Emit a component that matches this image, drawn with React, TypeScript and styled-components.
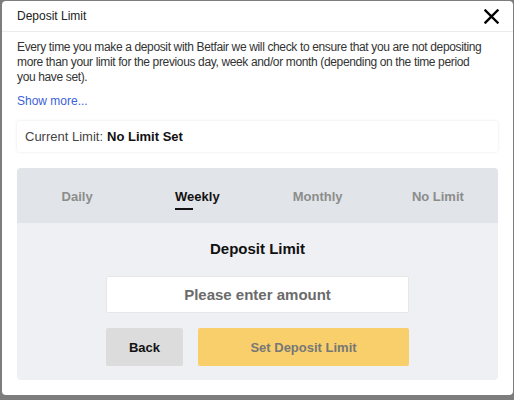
import React from "react";
import styled, { createGlobalStyle } from "styled-components";

const Global = createGlobalStyle`
  html, body { margin: 0; padding: 0; background: #7d7d7d; }
  body { font-family: "Liberation Sans", Arial, sans-serif; }
  * { box-sizing: border-box; }
`;

const Page = styled.div`
  width: 514px;
  height: 400px;
  padding: 1px 1px 0 2px;
  overflow: hidden;
`;

const Dialog = styled.div`
  width: 511px;
  height: 394px;
  background: #fff;
  border-radius: 4px;
  display: flex;
  flex-direction: column;
`;

const Header = styled.div`
  height: 31px;
  border-bottom: 1px solid #ececec;
  display: flex;
  align-items: center;
  justify-content: space-between;
  padding: 0 14px 0 15px;
`;

const Title = styled.div`
  font-size: 12px;
  color: #222;
`;

const CloseButton = styled.button`
  border: 0;
  background: none;
  padding: 0;
  width: 16px;
  height: 16px;
  display: flex;
  align-items: center;
  justify-content: center;
  cursor: pointer;
`;

const Body = styled.div`
  padding: 8px 15px 0 15px;
  display: flex;
  flex-direction: column;
`;

const Intro = styled.p`
  margin: 0;
  padding-right: 10px;
  font-size: 12px;
  line-height: 15px;
  letter-spacing: -0.36px;
  color: #333;
`;

const ShowMore = styled.a`
  margin-top: 8px;
  font-size: 12px;
  line-height: 16px;
  color: #3d5fd8;
  text-decoration: none;
`;

const CurrentBox = styled.div`
  margin-top: 12px;
  height: 31px;
  background: #fff;
  border-radius: 3px;
  box-shadow: 0 0 3px rgba(0, 0, 0, 0.1);
  display: flex;
  align-items: center;
  padding: 0 8px;
  font-size: 13px;
  color: #444;
`;

const CurrentValue = styled.strong`
  color: #111;
  margin-left: 4px;
`;

const Panel = styled.div`
  margin-top: 16px;
  height: 212px;
  background: #eff0f4;
  border-radius: 4px;
  overflow: hidden;
  display: flex;
  flex-direction: column;
`;

const Tabs = styled.div`
  height: 55px;
  background: #e1e4e8;
  display: grid;
  grid-template-columns: repeat(4, 1fr);
`;

const Tab = styled.div<{ $active?: boolean }>`
  display: flex;
  justify-content: center;
  align-items: flex-start;
  padding-top: 21px;
  font-size: 13px;
  font-weight: bold;
  color: ${(p) => (p.$active ? "#111" : "#8c8c8c")};
`;

const TabLabel = styled.span<{ $active?: boolean }>`
  position: relative;
  display: inline-block;
  line-height: 15px;
  &::after {
    content: "";
    display: ${(p) => (p.$active ? "block" : "none")};
    position: absolute;
    left: 0;
    top: 19px;
    width: 18px;
    height: 2px;
    background: #111;
  }
`;

const Form = styled.div`
  display: flex;
  flex-direction: column;
  align-items: center;
  padding-top: 17px;
`;

const FormTitle = styled.div`
  font-size: 15px;
  font-weight: bold;
  color: #111;
  line-height: 18px;
`;

const AmountInput = styled.input`
  margin-top: 18px;
  width: 303px;
  height: 37px;
  border: 1px solid #e6e6e6;
  border-radius: 2px;
  background: #fff;
  text-align: center;
  font-family: "Liberation Sans", Arial, sans-serif;
  font-size: 15px;
  font-weight: bold;
  outline: none;
  &::placeholder {
    color: #6b6b6b;
  }
`;

const Buttons = styled.div`
  margin-top: 15px;
  display: flex;
  gap: 15px;
  width: 303px;
`;

const Button = styled.button<{ $primary?: boolean }>`
  height: 38px;
  border: 0;
  border-radius: 2px;
  font-family: "Liberation Sans", Arial, sans-serif;
  font-size: 13px;
  font-weight: bold;
  width: ${(p) => (p.$primary ? "211px" : "77px")};
  background: ${(p) => (p.$primary ? "#f8cf6b" : "#dcdcdc")};
  color: ${(p) => (p.$primary ? "#777" : "#111")};
`;

const tabs = ["Daily", "Weekly", "Monthly", "No Limit"];

export default function App() {
  return (
    <>
      <Global />
      <Page>
        <Dialog>
          <Header>
            <Title>Deposit Limit</Title>
            <CloseButton aria-label="Close">
              <svg width="15" height="15" viewBox="0 0 15 15">
                <path d="M1.5 1.5 L13.5 13.5 M13.5 1.5 L1.5 13.5" stroke="#000" strokeWidth="2.4" strokeLinecap="square" />
              </svg>
            </CloseButton>
          </Header>
          <Body>
            <Intro>
              Every time you make a deposit with Betfair we will check to ensure that you are not depositing more
              than your limit for the previous day, week and/or month (depending on the time period you have set).
            </Intro>
            <ShowMore href="#">Show more...</ShowMore>
            <CurrentBox>
              Current Limit:<CurrentValue>No Limit Set</CurrentValue>
            </CurrentBox>
            <Panel>
              <Tabs>
                {tabs.map((t) => (
                  <Tab key={t} $active={t === "Weekly"}>
                    <TabLabel $active={t === "Weekly"}>{t}</TabLabel>
                  </Tab>
                ))}
              </Tabs>
              <Form>
                <FormTitle>Deposit Limit</FormTitle>
                <AmountInput placeholder="Please enter amount" />
                <Buttons>
                  <Button>Back</Button>
                  <Button $primary>Set Deposit Limit</Button>
                </Buttons>
              </Form>
            </Panel>
          </Body>
        </Dialog>
      </Page>
    </>
  );
}
